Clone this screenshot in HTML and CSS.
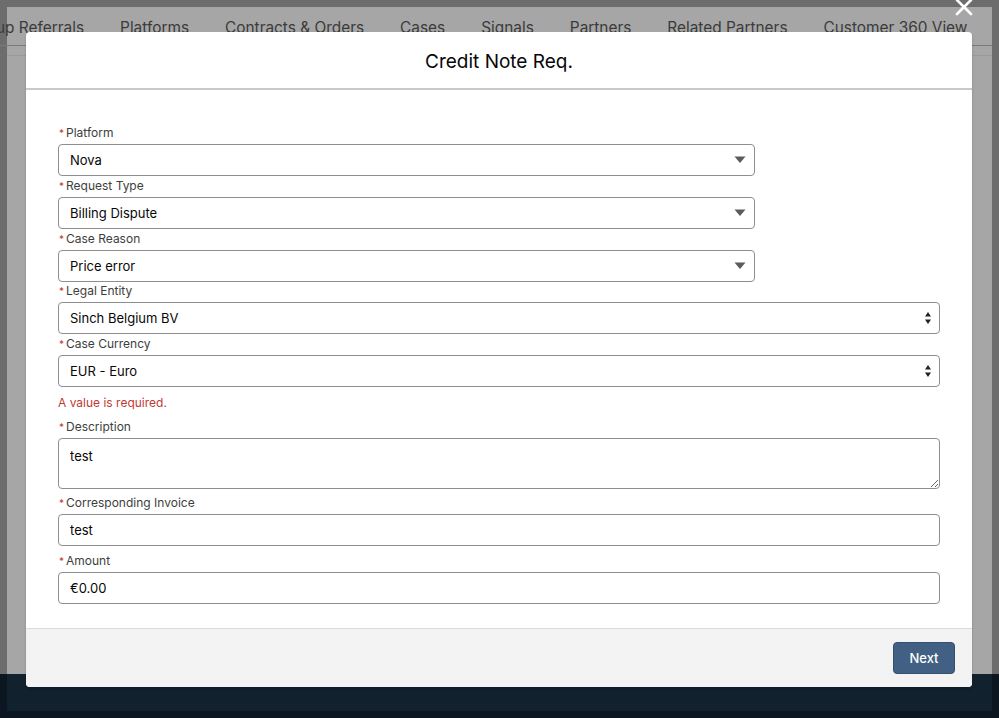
FILE: index.html
```html
<!DOCTYPE html>
<html lang="en">
<head>
<meta charset="utf-8">
<title>Credit Note Req.</title>
<link rel="stylesheet" href="styles.css">
</head>
<body>
<div class="app">
  <nav class="tabs">
    <span class="tab">up Referrals</span>
    <span class="tab">Platforms</span>
    <span class="tab">Contracts &amp; Orders</span>
    <span class="tab">Cases</span>
    <span class="tab">Signals</span>
    <span class="tab">Partners</span>
    <span class="tab">Related Partners</span>
    <span class="tab">Customer 360 View</span>
  </nav>
  <div class="subline"></div>
  <div class="app-main"></div>
  <div class="app-footer"></div>
</div>

<svg class="close" width="18" height="18" viewBox="0 0 18 18" aria-label="Close">
  <path d="M2 2 L16 16 M16 2 L2 16" stroke="#ffffff" stroke-width="2.6" stroke-linecap="round" fill="none"/>
</svg>

<section class="modal">
  <header class="modal-header">
    <h2 class="modal-title">Credit Note Req.</h2>
  </header>
  <div class="modal-body">
    <div class="field first">
      <div class="label"><abbr class="req">*</abbr>Platform</div>
      <div class="box picklist">
        <span>Nova</span>
        <svg width="12" height="8" viewBox="0 0 12 8"><path d="M0.5 0.5 H11.5 L6 7 Z" fill="#5c5c5c"/></svg>
      </div>
    </div>
    <div class="field">
      <div class="label"><abbr class="req">*</abbr>Request Type</div>
      <div class="box picklist">
        <span>Billing Dispute</span>
        <svg width="12" height="8" viewBox="0 0 12 8"><path d="M0.5 0.5 H11.5 L6 7 Z" fill="#5c5c5c"/></svg>
      </div>
    </div>
    <div class="field">
      <div class="label"><abbr class="req">*</abbr>Case Reason</div>
      <div class="box picklist">
        <span>Price error</span>
        <svg width="12" height="8" viewBox="0 0 12 8"><path d="M0.5 0.5 H11.5 L6 7 Z" fill="#5c5c5c"/></svg>
      </div>
    </div>
    <div class="field flush">
      <div class="label"><abbr class="req">*</abbr>Legal Entity</div>
      <div class="box select">
        <span>Sinch Belgium BV</span>
        <svg width="8" height="16" viewBox="0 0 8 16"><path d="M4 2 L7 6.5 H1 Z M1 9.5 H7 L4 14 Z" fill="#222"/></svg>
      </div>
    </div>
    <div class="field">
      <div class="label"><abbr class="req">*</abbr>Case Currency</div>
      <div class="box select">
        <span>EUR - Euro</span>
        <svg width="8" height="16" viewBox="0 0 8 16"><path d="M4 2 L7 6.5 H1 Z M1 9.5 H7 L4 14 Z" fill="#222"/></svg>
      </div>
    </div>
    <div class="error">A value is required.</div>
    <div class="field desc">
      <div class="label"><abbr class="req">*</abbr>Description</div>
      <textarea class="box textarea" readonly>test</textarea>
    </div>
    <div class="field invoice">
      <div class="label"><abbr class="req">*</abbr>Corresponding Invoice</div>
      <div class="box input"><span>test</span></div>
    </div>
    <div class="field amount">
      <div class="label"><abbr class="req">*</abbr>Amount</div>
      <div class="box input"><span>€0.00</span></div>
    </div>
  </div>
  <footer class="modal-footer">
    <button class="btn-next" type="button">Next</button>
  </footer>
</section>
</body>
</html>
```

FILE: styles.css
```css
html, body {
  margin: 0;
  padding: 0;
}

body {
  width: 999px;
  height: 718px;
  overflow: hidden;
  box-sizing: border-box;
  padding-top: 7px;
  background: linear-gradient(#6d6d6d 0, #6d6d6d 674px, #0b1620 674px, #0b1620 100%);
  font-family: Inter, "Noto Sans", "Liberation Sans", sans-serif;
  position: relative;
}

.app {
  margin: 0 7px;
  height: 704px;
  background: #a6a6a6;
  display: flex;
  flex-direction: column;
}

.tabs {
  height: 39px;
  box-sizing: border-box;
  padding-top: 2px;
  border-bottom: 1px solid #7b7b7b;
  display: flex;
  align-items: center;
  gap: 36px;
  margin-left: -11px;
  white-space: nowrap;
  font-size: 15.4px;
  color: #3b3b3b;
}

.tab {
  flex: none;
}

.subline {
  height: 9px;
  border-bottom: 1px solid #9a9a9a;
}

.app-main {
  flex: 1;
}

.app-footer {
  height: 37px;
  background: #11212e;
}

.close {
  position: absolute;
  left: 955px;
  top: -2px;
}

.modal {
  position: absolute;
  left: 26px;
  top: 32px;
  width: 946px;
  height: 655px;
  background: #ffffff;
  border-radius: 4px;
  display: flex;
  flex-direction: column;
  box-shadow: 0 2px 3px rgba(0, 0, 0, 0.16);
}

.modal-header {
  height: 56px;
  border-bottom: 2px solid #c9c9c9;
  display: flex;
  align-items: center;
  justify-content: center;
  border-radius: 4px 4px 0 0;
}

.modal-title {
  margin: 0;
  font-size: 19px;
  font-weight: 400;
  color: #080707;
  padding-top: 2px;
}

.modal-body {
  flex: 1;
  padding: 34px 32px 0 32px;
}

.field {
  margin-top: 1px;
}

.field.first {
  margin-top: 0;
}

.field.flush {
  margin-top: 0;
}

.field.desc {
  margin-top: 6px;
}

.field.invoice {
  margin-top: 5px;
}

.field.amount {
  margin-top: 6px;
}

.label {
  font-size: 12px;
  line-height: 18px;
  height: 18px;
  color: #3e3e3c;
  margin-bottom: 2px;
}

.req {
  color: #c23934;
  text-decoration: none;
  margin: 0 2px 0 1px;
  font-size: 10px;
}

.box {
  box-sizing: border-box;
  height: 32px;
  border: 1px solid #8e8e8e;
  border-radius: 4px;
  background: #ffffff;
  display: flex;
  align-items: center;
  justify-content: space-between;
  padding: 0 7px 0 11px;
  font-size: 13px;
  color: #080707;
}

.picklist {
  width: 697px;
  padding-right: 8px;
}

.select {
  width: 882px;
}

.input {
  width: 882px;
}

.textarea {
  display: block;
  width: 882px;
  height: 51px;
  padding: 8px 11px;
  font-family: inherit;
  font-size: 13px;
  line-height: 18px;
  resize: vertical;
  outline: none;
}

.error {
  margin-top: 7px;
  font-size: 12px;
  line-height: 18px;
  color: #c23934;
}

.modal-footer {
  height: 59px;
  border-top: 1px solid #dddbda;
  background: #f3f3f3;
  border-radius: 0 0 4px 4px;
  display: flex;
  justify-content: flex-end;
  align-items: flex-start;
  padding: 13px 17px 0 0;
  box-sizing: border-box;
  margin-top: auto;
}

.btn-next {
  width: 62px;
  height: 32px;
  border-radius: 4px;
  border: 1px solid #35516f;
  background: #416083;
  color: #ffffff;
  font-family: inherit;
  font-size: 13px;
  font-weight: 500;
  padding: 0;
}
```
